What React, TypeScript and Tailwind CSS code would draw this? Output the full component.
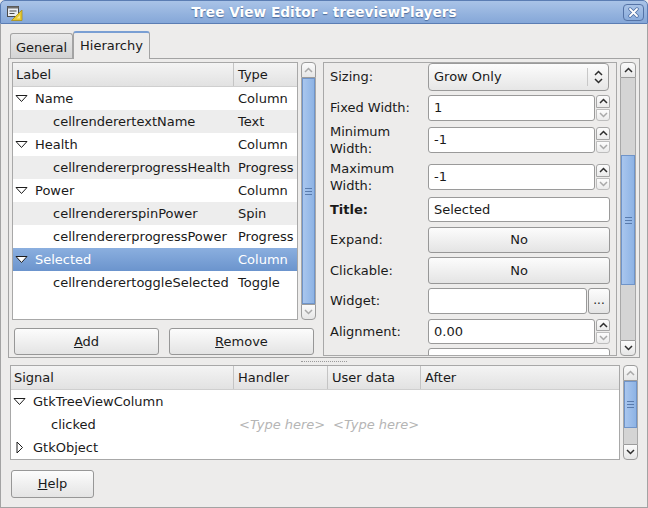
import React from 'react';

const Chevron = ({ dir, dim }: { dir: 'up' | 'down'; dim?: boolean }) => (
  <svg width="9" height="6" viewBox="0 0 9 6">
    <path
      d={dir === 'up' ? 'M1 5 L4.5 1.5 L8 5' : 'M1 1 L4.5 4.5 L8 1'}
      fill="none"
      stroke={dim ? '#a9a9a9' : '#2e2e2e'}
      strokeWidth="1.5"
    />
  </svg>
);

const Expander = ({ open }: { open: boolean }) => (
  <svg width="13" height="13" viewBox="0 0 13 13" className="shrink-0">
    {open ? (
      <path d="M1 3.5 L12 3.5 L6.5 9.5 Z" fill="#ffffff" stroke="#1c1c1c" strokeWidth="1" />
    ) : (
      <path d="M4 1 L9.5 6.5 L4 12 Z" fill="#ffffff" stroke="#1c1c1c" strokeWidth="1" />
    )}
  </svg>
);

const Grip = () => (
  <div className="flex flex-col gap-[2px]">
    <div className="w-[7px] h-px bg-[#3d5f93] opacity-70" />
    <div className="w-[7px] h-px bg-[#3d5f93] opacity-70" />
    <div className="w-[7px] h-px bg-[#3d5f93] opacity-70" />
  </div>
);

const ScrollButton = ({ dir, dim }: { dir: 'up' | 'down'; dim?: boolean }) => (
  <div
    className={
      'h-[16px] shrink-0 flex items-center justify-center border border-[#9c9c9c] bg-gradient-to-b from-[#fbfbfb] to-[#e6e6e6] ' +
      (dir === 'up' ? 'rounded-t-[4px]' : 'rounded-b-[4px]')
    }
  >
    <Chevron dir={dir} dim={dim} />
  </div>
);

const Thumb = ({ cls }: { cls: string }) => (
  <div className={'shrink-0 flex items-center justify-center border border-[#6f94c9] bg-gradient-to-r from-[#a9c6ee] to-[#8db3e5] ' + cls}>
    <Grip />
  </div>
);

const Scrollbar = ({
  className,
  before,
  thumb,
  upDim,
  downDim,
}: {
  className: string;
  before: string;
  thumb: string;
  upDim?: boolean;
  downDim?: boolean;
}) => (
  <div className={'flex flex-col shrink-0 ' + className}>
    <ScrollButton dir="up" dim={upDim} />
    <div className="flex-1 flex flex-col bg-[#d4d4d4] border-x border-[#a8a8a8]">
      <div className={before} />
      <Thumb cls={thumb} />
    </div>
    <ScrollButton dir="down" dim={downDim} />
  </div>
);

const Button = ({ children, className }: { children: React.ReactNode; className: string }) => (
  <div
    className={
      'flex items-center justify-center rounded-[3px] border border-[#979797] bg-gradient-to-b from-[#fcfcfc] to-[#e4e4e4] text-[#1a1a1a] ' +
      className
    }
  >
    {children}
  </div>
);

const Spin = ({ value }: { value: string }) => (
  <div className="flex h-full w-[182px] gap-px">
    <div className="flex-1 h-full border border-[#9a9a9a] rounded-[3px] bg-white flex items-center pl-[5px]">{value}</div>
    <div className="w-[14px] flex flex-col gap-px">
      <div className="flex-1 border border-[#a6a6a6] rounded-t-[3px] bg-gradient-to-b from-[#fcfcfc] to-[#ebebeb] flex items-center justify-center">
        <Chevron dir="up" />
      </div>
      <div className="flex-1 border border-[#bdbdbd] rounded-b-[3px] bg-gradient-to-b from-[#fcfcfc] to-[#ebebeb] flex items-center justify-center">
        <Chevron dir="down" dim />
      </div>
    </div>
  </div>
);

const Entry = ({ value, className }: { value: string; className?: string }) => (
  <div className={'h-full border border-[#9a9a9a] rounded-[3px] bg-white flex items-center pl-[5px] ' + (className ?? 'w-[182px]')}>
    {value}
  </div>
);

type Row = { label: string; type: string; level: number; open?: boolean; sel?: boolean; alt?: boolean };

const rows: Row[] = [
  { label: 'Name', type: 'Column', level: 0, open: true },
  { label: 'cellrenderertextName', type: 'Text', level: 1, alt: true },
  { label: 'Health', type: 'Column', level: 0, open: true },
  { label: 'cellrendererprogressHealth', type: 'Progress', level: 1, alt: true },
  { label: 'Power', type: 'Column', level: 0, open: true },
  { label: 'cellrendererspinPower', type: 'Spin', level: 1, alt: true },
  { label: 'cellrendererprogressPower', type: 'Progress', level: 1 },
  { label: 'Selected', type: 'Column', level: 0, open: true, sel: true },
  { label: 'cellrenderertoggleSelected', type: 'Toggle', level: 1 },
];

const HeaderCell = ({ children, className }: { children?: React.ReactNode; className: string }) => (
  <div className={'h-full flex items-center pl-[3px] ' + className}>{children}</div>
);

export default function App() {
  return (
    <div className="w-[648px] h-[508px] bg-[#edeceb] flex flex-col overflow-hidden font-['DejaVu_Sans',sans-serif] text-[13px] text-[#1a1a1a]">
      {/* title bar */}
      <div className="h-[24px] shrink-0 relative flex items-center justify-center bg-gradient-to-b from-[#a9c3e7] to-[#85a7d8] border border-[#5b7db3] rounded-t-[5px]">
        <div className="absolute left-[5px] top-[4px]">
          <svg width="17" height="16" viewBox="0 0 17 16">
            <rect x="1.5" y="1.5" width="11" height="10" fill="#e9edf3" stroke="#4a4a4a" />
            <rect x="1.5" y="1.5" width="11" height="2" fill="#6d6d6d" />
            <path d="M3.5 6 H10.5 M3.5 8.5 H8.5" stroke="#4a4a4a" />
            <path d="M16 5 L16 15.5 L5.5 15.5 Z" fill="#e6c830" stroke="#a98f17" strokeWidth="0.8" />
            <path d="M14 10 L14 13.5 L10.5 13.5 Z" fill="#f6e68a" />
          </svg>
        </div>
        <span className="font-bold text-[13.7px] text-white [text-shadow:0_1px_1px_#4d6c9c]">Tree View Editor - treeviewPlayers</span>
        <div className="absolute right-[3px] top-[3px] w-[21px] h-[17px] rounded-[4px] border border-[#5573a6] bg-gradient-to-b from-[#a9c3e7] to-[#8aacdc] flex items-center justify-center">
          <svg width="11" height="11" viewBox="0 0 11 11">
            <path d="M2 2 L9 9 M9 2 L2 9" stroke="#4f6fa3" strokeWidth="3.4" strokeLinecap="round" />
            <path d="M2 2 L9 9 M9 2 L2 9" stroke="#ffffff" strokeWidth="1.8" strokeLinecap="round" />
          </svg>
        </div>
      </div>

      {/* body */}
      <div className="flex-1 flex flex-col border-x border-b border-[#a3a3a3] px-[7px] pt-[6px]">
        {/* tabs */}
        <div className="h-[28px] flex items-end pl-[2px] shrink-0 relative z-10">
          <div className="h-[25px] w-[63px] flex items-center justify-center border border-b-0 border-[#a3a3a3] rounded-t-[3px] bg-gradient-to-b from-[#eaeaea] to-[#d4d4d4] pt-[3px]">
            General
          </div>
          <div className="h-[28px] w-[77px] flex items-center justify-center border border-b-0 border-[#a3a3a3] border-t-[#7a9fd3] border-t-2 rounded-t-[3px] bg-[#edeceb] mb-[-1px] pb-px">
            Hierarchy
          </div>
        </div>

        {/* notebook */}
        <div className="h-[300px] shrink-0 border border-[#a3a3a3] flex pt-[3px] pl-[3px] pr-[3px]">
          {/* left column */}
          <div className="w-[304px] flex flex-col">
            <div className="h-[258px] shrink-0 flex gap-[3px]">
              <div className="w-[286px] border border-[#a8a8a8] bg-white flex flex-col">
                <div className="h-[24px] shrink-0 flex bg-gradient-to-b from-[#f4f4f4] to-[#e2e2e2] border-b border-[#cfcfcf]">
                  <HeaderCell className="w-[221px] border-r border-[#c4c4c4]">Label</HeaderCell>
                  <HeaderCell className="flex-1 pl-[4px]">Type</HeaderCell>
                </div>
                {rows.map((r) => (
                  <div
                    key={r.label}
                    className={
                      'h-[23px] shrink-0 flex items-center ' +
                      (r.sel
                        ? 'bg-gradient-to-b from-[#8bafdf] to-[#6b94cd] text-white'
                        : r.alt
                          ? 'bg-[#ededed]'
                          : 'bg-white')
                    }
                  >
                    <div className="w-[222px] flex items-center pl-[2px] gap-[7px]">
                      {r.level === 0 ? (
                        <>
                          <Expander open={!!r.open} />
                          <span>{r.label}</span>
                        </>
                      ) : (
                        <span className="pl-[38px]">{r.label}</span>
                      )}
                    </div>
                    <span className="pl-[3px]">{r.type}</span>
                  </div>
                ))}
              </div>
              <Scrollbar className="w-[15px]" before="h-0" thumb="flex-1" upDim downDim />
            </div>
            <div className="flex gap-[10px] pl-[2px] mt-[8px] shrink-0">
              <Button className="w-[145px] h-[27px]">
                <span><span className="underline">A</span>dd</span>
              </Button>
              <Button className="w-[145px] h-[27px]">
                <span><span className="underline">R</span>emove</span>
              </Button>
            </div>
          </div>

          {/* right: properties */}
          <div className="ml-[7px] w-[294px] h-[294px] border border-[#a8a8a8] overflow-hidden flex flex-col pl-[6px]">
            <div className="flex items-center h-[28px] shrink-0">
              <span className="w-[98px]">Sizing:</span>
              <div className="w-[181px] h-full rounded-[4px] border border-[#9a9a9a] bg-gradient-to-b from-[#fcfcfc] to-[#e6e6e6] flex items-center">
                <span className="flex-1 pl-[5px]">Grow Only</span>
                <div className="w-px h-[18px] bg-[#c8c8c8]" />
                <div className="w-[20px] flex flex-col items-center gap-[2px]">
                  <Chevron dir="up" />
                  <Chevron dir="down" />
                </div>
              </div>
            </div>
            <div className="flex items-center h-[26px] mt-[4px] shrink-0">
              <span className="w-[98px]">Fixed Width:</span>
              <Spin value="1" />
            </div>
            <div className="flex items-center h-[26px] mt-[6px] shrink-0">
              <span className="w-[98px] leading-[17px]">Minimum<br />Width:</span>
              <Spin value="-1" />
            </div>
            <div className="flex items-center h-[26px] mt-[11px] shrink-0">
              <span className="w-[98px] leading-[17px]">Maximum<br />Width:</span>
              <Spin value="-1" />
            </div>
            <div className="flex items-center h-[25px] mt-[7px] shrink-0">
              <span className="w-[98px] font-bold">Title:</span>
              <Entry value="Selected" />
            </div>
            <div className="flex items-center h-[26px] mt-[5px] shrink-0">
              <span className="w-[98px]">Expand:</span>
              <Button className="w-[182px] h-full">No</Button>
            </div>
            <div className="flex items-center h-[27px] mt-[4px] shrink-0">
              <span className="w-[98px]">Clickable:</span>
              <Button className="w-[182px] h-full">No</Button>
            </div>
            <div className="flex items-center h-[26px] mt-[4px] shrink-0">
              <span className="w-[98px]">Widget:</span>
              <Entry value="" className="w-[159px]" />
              <Button className="w-[22px] h-full ml-px text-[12px] pb-[3px]">...</Button>
            </div>
            <div className="flex items-center h-[25px] mt-[5px] shrink-0">
              <span className="w-[98px]">Alignment:</span>
              <Spin value="0.00" />
            </div>
            <div className="flex items-center h-[26px] mt-[4px] shrink-0">
              <span className="w-[98px]" />
              <Entry value="" />
            </div>
          </div>
          <Scrollbar className="ml-[3px] w-[16px] h-[294px]" before="h-[77px] shrink-0" thumb="h-[130px]" />
        </div>

        {/* paned handle */}
        <div className="h-[7px] shrink-0 flex items-center justify-center">
          <div className="w-[46px] h-[2px] border-t border-dotted border-[#9a9a9a]" />
        </div>

        {/* signals */}
        <div className="h-[95px] shrink-0 flex gap-[3px] pl-[2px]">
          <div className="w-[610px] border border-[#a8a8a8] bg-white flex flex-col">
            <div className="h-[24px] shrink-0 flex bg-gradient-to-b from-[#f4f4f4] to-[#e2e2e2] border-b border-[#cfcfcf]">
              <HeaderCell className="w-[223px] border-r border-[#c4c4c4]">Signal</HeaderCell>
              <HeaderCell className="w-[94px] border-r border-[#c4c4c4] pl-[4px]">Handler</HeaderCell>
              <HeaderCell className="w-[93px] border-r border-[#c4c4c4] pl-[4px]">User data</HeaderCell>
              <HeaderCell className="flex-1 pl-[4px]">After</HeaderCell>
            </div>
            <div className="h-[23px] shrink-0 flex items-center pl-[2px] gap-[7px]">
              <Expander open />
              <span>GtkTreeViewColumn</span>
            </div>
            <div className="h-[23px] shrink-0 flex items-center">
              <span className="w-[228px] pl-[40px]">clicked</span>
              <span className="w-[94px] italic text-[#b5b5b5]">&lt;Type here&gt;</span>
              <span className="italic text-[#b5b5b5]">&lt;Type here&gt;</span>
            </div>
            <div className="h-[23px] shrink-0 flex items-center pl-[2px] gap-[7px]">
              <Expander open={false} />
              <span>GtkObject</span>
            </div>
          </div>
          <Scrollbar className="w-[15px] h-[95px]" before="h-0" thumb="h-[47px]" upDim />
        </div>

        {/* help */}
        <div className="mt-[10px] pl-[3px]">
          <Button className="w-[83px] h-[28px]">
            <span><span className="underline">H</span>elp</span>
          </Button>
        </div>
      </div>
    </div>
  );
}
